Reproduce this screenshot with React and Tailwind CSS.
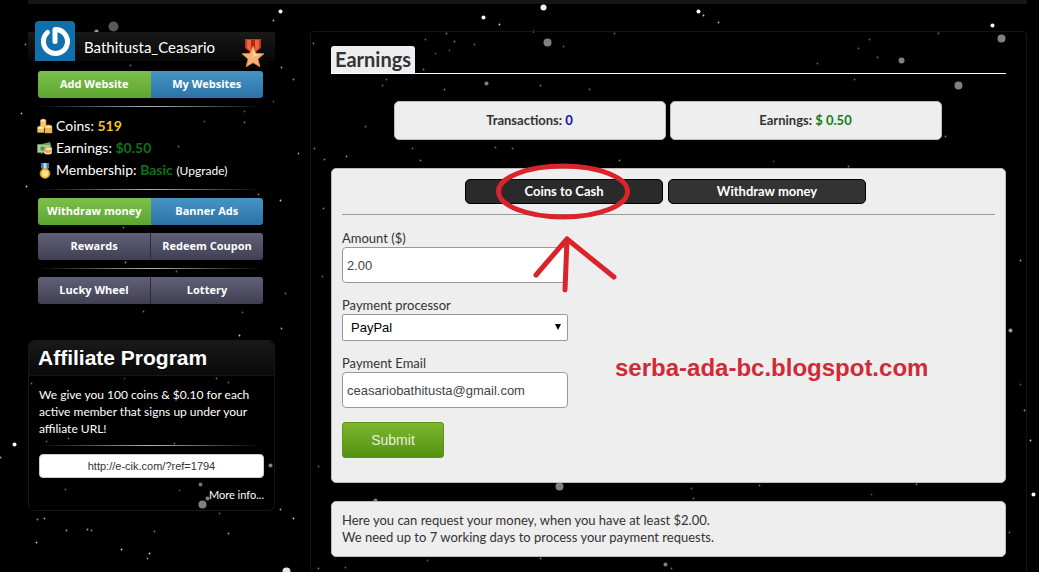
import React, { useState } from "react";

// x, y, radius, brightness
const stars = [
  [113, 26, 5, 0.35], [96, 31, 2, 0.6], [280, 11, 2, 1], [273, 20, 1, 0.9], [25, 44, 1, 0.7],
  [130, 65, 1, 0.5], [281, 67, 1, 0.8], [293, 79, 1, 0.7], [21, 113, 1, 0.9], [244, 111, 1, 0.4],
  [244, 122, 1, 0.6], [204, 121, 1, 0.4], [273, 101, 1, 0.4], [178, 146, 1, 0.5], [298, 153, 1, 0.8],
  [26, 186, 1, 1], [258, 194, 1, 0.6], [280, 200, 1, 1], [123, 227, 1, 0.6], [125, 262, 1, 0.7],
  [176, 271, 1, 0.5], [285, 293, 1, 0.5], [143, 311, 1, 0.5], [242, 312, 1, 0.5], [281, 328, 1, 0.8],
  [239, 335, 1, 1], [31, 383, 1, 0.5], [216, 378, 1, 0.5], [228, 382, 1, 0.5], [124, 378, 1, 0.3],
  [14, 444, 2, 1], [0, 457, 1, 0.8], [46, 441, 1, 0.5], [68, 438, 1, 0.5], [174, 443, 1, 0.5],
  [270, 465, 2, 0.5], [200, 484, 2, 0.45], [207, 498, 2, 0.5], [202, 504, 4, 0.5], [65, 489, 1, 0.5],
  [179, 490, 1, 0.4], [219, 513, 1, 0.5], [280, 509, 1, 0.8], [293, 518, 1, 1], [37, 519, 1, 0.7],
  [44, 518, 1, 0.8], [66, 530, 1, 0.8], [87, 529, 1, 0.8], [91, 530, 1, 0.7], [154, 531, 1, 0.6],
  [228, 533, 1, 0.8], [36, 542, 1, 1], [121, 549, 1, 1], [149, 553, 1, 1], [147, 558, 1, 0.7],
  [286, 571, 4, 0.9], [543, 7, 3, 0.95], [483, 17, 2, 1], [499, 24, 1, 1], [533, 31, 1, 1],
  [446, 33, 1, 0.6], [425, 39, 1, 0.5], [454, 41, 1, 0.6], [474, 44, 1, 0.5], [435, 53, 1, 0.4],
  [449, 50, 1, 0.4], [547, 42, 4, 0.5], [563, 46, 1, 0.5], [614, 33, 1, 0.5], [313, 43, 1, 0.6],
  [423, 69, 1, 0.6], [386, 79, 1, 0.5], [382, 85, 1, 0.5], [444, 89, 1, 0.6], [486, 83, 2, 0.5],
  [540, 85, 1, 0.6], [589, 89, 1, 0.5], [365, 126, 1, 0.5], [314, 148, 1, 0.6], [324, 159, 1, 0.6],
  [346, 156, 1, 0.7], [420, 160, 1, 0.6], [412, 148, 1, 0.5], [495, 147, 1, 0.5], [512, 148, 1, 0.5],
  [619, 160, 1, 0.6], [323, 208, 1, 0.6], [698, 11, 2, 1], [703, 15, 1, 1], [718, 22, 1, 0.9],
  [992, 25, 2, 1], [1001, 38, 4, 0.5], [938, 33, 1, 0.5], [869, 39, 1, 0.5], [858, 48, 1, 0.5],
  [877, 57, 1, 0.5], [901, 60, 3, 0.5], [817, 63, 1, 0.5], [854, 79, 1, 0.5], [958, 85, 4, 0.5],
  [945, 136, 1, 0.6], [848, 166, 1, 0.6], [773, 161, 1, 0.3], [1020, 260, 1, 0.8], [1010, 330, 2, 0.6],
  [1020, 384, 1, 0.4], [1024, 410, 1, 0.7], [1030, 440, 1, 1], [1033, 494, 2, 1], [1009, 532, 1, 0.5],
  [322, 276, 1, 0.5], [318, 466, 1, 0.5], [559, 486, 4, 0.5], [375, 500, 2, 0.5], [691, 488, 1, 0.5],
  [693, 498, 1, 0.5], [759, 485, 1, 0.5], [871, 494, 1, 0.4], [916, 484, 1, 0.6], [427, 560, 1, 0.4],
  [540, 558, 1, 0.6], [665, 564, 2, 0.5], [671, 568, 1, 0.5], [318, 568, 1, 0.6], [345, 567, 1, 0.5],
];

function Stars() {
  return (
    <svg className="absolute inset-0 h-full w-full" aria-hidden="true">
      {stars.map(([x, y, r, o], i) => (
        <circle key={i} cx={x + 0.5} cy={y + 0.5} r={r === 1 ? 0.9 : r} fill="#fff" opacity={r === 1 ? o * 0.8 : o} />
      ))}
    </svg>
  );
}

function PowerAvatar() {
  return (
    <svg viewBox="0 0 40 40" className="-mt-[11px] h-10 w-10 shrink-0 rounded-t" role="img" aria-label="Avatar">
      <rect width="40" height="40" fill="#0f70ab" />
      <path d="M12.500 11.500A12 12 0 1 0 20 8.500V20.500" fill="none" stroke="#fff" strokeWidth="5" strokeLinecap="round" strokeLinejoin="round" />
    </svg>
  );
}

function StarMedal() {
  return (
    <svg viewBox="0 0 24 30" className="h-[30px] w-6" aria-hidden="true">
      <path d="M4 1h16v9l-5 4H9l-5-4z" fill="#c23a1c" />
      <path d="M6 2h4v10H8l-2-2zM14 2h4v8l-2 2h-2z" fill="#ee6440" />
      <path d="M10 2h4v10h-4z" fill="#a82a12" />
      <path d="M12 8l3 7.200 8 .6-6.100 5.200 2 7.800L12 24.700l-6.900 4.100 2-7.800L1 15.800l8-.6z" fill="#f7b274" stroke="#e08a48" strokeWidth=".8" />
      <path d="M12 10l2.300 6 5.500.6L12 19z" fill="#ffd09c" />
    </svg>
  );
}

function CoinsIcon() {
  return (
    <svg viewBox="0 0 16 16" className="h-4 w-4" aria-hidden="true">
      <g stroke="#d09a3c" strokeWidth=".5">
        <path d="M3.500 3v7h5.500V3z" fill="#f5cb6c" />
        <path d="M.5 10v4.500h6.500V10z" fill="#f3c463" />
        <path d="M8 9v6h7V9z" fill="#efba55" />
        <ellipse cx="6.200" cy="2.800" rx="2.800" ry="1.800" fill="#ffe9a5" />
        <ellipse cx="3.800" cy="9.800" rx="3.300" ry="1.900" fill="#ffe9a5" />
        <ellipse cx="11.500" cy="8.800" rx="3.500" ry="1.900" fill="#ffe29a" />
      </g>
    </svg>
  );
}

function CashIcon() {
  return (
    <svg viewBox="0 0 16 16" className="h-4 w-4" aria-hidden="true">
      <path d="M1 5l12-3 2 7-11 5z" fill="#6fa268" />
      <path d="M.5 4.500h12.500v8H.5z" fill="#a9cf97" stroke="#6b9a5d" strokeWidth=".7" />
      <circle cx="5.500" cy="8.500" r="2.200" fill="#5d9055" />
      <path d="M7 10v3c1 2 7 2 8 0V8z" fill="#e5b061" />
      <ellipse cx="11.500" cy="9" rx="3.500" ry="1.900" fill="#ffe1a0" stroke="#c08a3a" strokeWidth=".6" />
      <path d="M7.500 12.500c2 1.500 5 1.500 7 0" fill="none" stroke="#fff0c0" strokeWidth=".8" />
    </svg>
  );
}

function MedalIcon() {
  return (
    <svg viewBox="0 0 16 16" className="h-4 w-4" aria-hidden="true">
      <path d="M4 0h8v5l-2.500 2h-3L4 5z" fill="#3f7fb5" />
      <path d="M6.500 0h3v6h-3z" fill="#b9daf3" />
      <circle cx="8" cy="10.500" r="5" fill="#eebc3e" stroke="#b98420" strokeWidth=".6" />
      <circle cx="8" cy="10.500" r="3.200" fill="#ffe283" />
    </svg>
  );
}

const tones = {
  green: "bg-gradient-to-b from-[#7cc04b] to-[#5da52f]",
  blue: "bg-gradient-to-b from-[#4595c4] to-[#2c72a8]",
  gray: "bg-gradient-to-b from-[#60607a] to-[#414052] first:border-r first:border-[#2b2a38]",
};

function ButtonPair({ items }) {
  return (
    <div className="ml-[10px] mr-3 flex overflow-hidden rounded-[3px]">
      {items.map(([label, tone]) => (
        <button
          key={label}
          type="button"
          className={`h-[27px] flex-1 basis-0 whitespace-nowrap font-['Open_Sans',sans-serif] text-[11px] font-bold text-white ${tones[tone]}`}
        >
          {label}
        </button>
      ))}
    </div>
  );
}

function Divider() {
  return <div className="ml-[10px] mr-3 my-2 h-px bg-gradient-to-r from-transparent via-[#b5b2aa] to-transparent" />;
}

function Sidebar() {
  return (
    <aside className="w-[247px] shrink-0 pt-px">
      <div className="mb-[10px] flex h-[29px] items-start bg-gradient-to-b from-[#191919] to-[#070707] pl-[7px] pr-[10px]">
        <PowerAvatar />
        <span className="ml-[9px] flex-1 text-[15px] leading-[30px]">Bathitusta_Ceasario</span>
        <span className="pt-[6px]">
          <StarMedal />
        </span>
      </div>

      <ButtonPair items={[["Add Website", "green"], ["My Websites", "blue"]]} />
      <Divider />
      <ul className="-mb-px ml-[9px] text-[14px] leading-[22px]">
        <li className="flex items-center gap-[3px]">
          <CoinsIcon />
          <span>Coins: <b className="text-[#f5c528]">519</b></span>
        </li>
        <li className="flex items-center gap-[3px]">
          <CashIcon />
          <span>Earnings: <b className="text-[#12701a]">$0.50</b></span>
        </li>
        <li className="flex items-center gap-[3px]">
          <MedalIcon />
          <span>
            Membership: <b className="text-[#12701a]">Basic</b>{" "}
            <a href="#upgrade" className="text-[12px]">(Upgrade)</a>
          </span>
        </li>
      </ul>
      <Divider />
      <ButtonPair items={[["Withdraw money", "green"], ["Banner Ads", "blue"]]} />
      <div className="h-2" />
      <ButtonPair items={[["Rewards", "gray"], ["Redeem Coupon", "gray"]]} />
      <Divider />
      <ButtonPair items={[["Lucky Wheel", "gray"], ["Lottery", "gray"]]} />

      <section className="mt-9 rounded-md border border-[#171717]">
        <h2 className="rounded-t-md border-b border-[#171717] bg-gradient-to-b from-[#191919] to-[#090909] pl-[9px] font-['Liberation_Sans',sans-serif] text-[21px] font-bold leading-[34px]">
          Affiliate Program
        </h2>
        <p className="mb-2 ml-[10px] mt-[10px] text-[12px] leading-[17px]">
          We give you 100 coins &amp; $0.10 for each
          <br />
          active member that signs up under your
          <br />
          affiliate URL!
        </p>
        <Divider />
        <div className="mx-[10px]">
          <input
            type="text"
            aria-label="Affiliate URL"
            readOnly
            value="http://e-cik.com/?ref=1794"
            className="block h-6 w-full rounded border border-[#ccc] bg-white text-center font-['Liberation_Sans',sans-serif] text-[11px] text-[#333]"
          />
          <a href="#more" className="block pb-[7px] pt-2 text-right text-[11px] leading-[17px]">
            More info...
          </a>
        </div>
      </section>
    </aside>
  );
}

// hand drawn marker around the active tab
function Marker() {
  return (
    <svg
      viewBox="0 0 136 134"
      className="pointer-events-none absolute -top-[17px] left-1/2 z-10 h-[134px] w-[136px] -translate-x-1/2"
      fill="none"
      stroke="#da242c"
      strokeWidth="5"
      strokeLinecap="round"
      strokeLinejoin="round"
      aria-hidden="true"
    >
      <ellipse cx="67" cy="29.500" rx="64.500" ry="25.500" />
      <path d="M40 113L71 77l-2 51M71 77l47 38" />
    </svg>
  );
}

const labelClass = "block text-[13px] leading-[17px]";
const inputClass =
  "block h-9 w-full rounded border border-[#999] bg-white px-1 font-['Liberation_Sans',sans-serif] text-[13px] text-[#444]";
const boxClass = "rounded-[5px] border border-[#bbb] bg-[#eee]";

function EarningsForm() {
  const [formData, setFormData] = useState({
    amount: "2.00",
    processor: "PayPal",
    email: "ceasariobathitusta@gmail.com",
  });

  const handleChange = (e) => {
    setFormData({ ...formData, [e.target.name]: e.target.value });
  };

  return (
    <form className="w-[226px] shrink-0" onSubmit={(e) => e.preventDefault()}>
      <label htmlFor="amount" className={labelClass}>Amount ($)</label>
      <input
        id="amount"
        name="amount"
        value={formData.amount}
        onChange={handleChange}
        className={`${inputClass} mb-[14px]`}
      />
      <label htmlFor="processor" className={labelClass}>Payment processor</label>
      <div className="relative mb-[14px]">
        <select
          id="processor"
          name="processor"
          value={formData.processor}
          onChange={handleChange}
          className="block h-[27px] w-full appearance-none rounded-[2px] border border-[#999] bg-white px-2 font-['Liberation_Sans',sans-serif] text-[13px] text-black"
        >
          <option>PayPal</option>
        </select>
        <svg viewBox="0 0 6 6" className="pointer-events-none absolute right-[7px] top-[10px] h-[6px] w-[6px]" aria-hidden="true">
          <path d="M0 0h6L3 6z" fill="#000" />
        </svg>
      </div>
      <label htmlFor="email" className={labelClass}>Payment Email</label>
      <input
        id="email"
        name="email"
        type="email"
        value={formData.email}
        onChange={handleChange}
        className={`${inputClass} mb-[14px]`}
      />
      <button
        type="submit"
        className="block h-9 w-[102px] rounded-[3px] border border-[#5b9512] bg-gradient-to-b from-[#7db72f] to-[#55920e] font-['Liberation_Sans',sans-serif] text-[14px] text-[#e8f0de]"
      >
        Submit
      </button>
    </form>
  );
}

function App() {
  return (
    <div className="relative flex min-h-screen flex-col bg-black pl-7 pr-3 font-['Lato',sans-serif] text-white">
      <Stars />
      <div className="relative h-1 bg-[#151515]" />
      <div className="relative flex flex-1 gap-[35px] pt-[27px]">
        <Sidebar />

        <main className="min-w-0 flex-1 rounded-t border-x border-t border-[#141414] px-5 pb-4 pt-[14px] text-[13px] text-[#333]">
          <div className="flex border-b border-white">
            <h1 className="rounded-t-[3px] bg-[#eee] px-1 text-[20px] font-bold leading-[27px]">Earnings</h1>
          </div>

          <div className="mt-[27px] flex justify-center gap-1 pr-[2px] text-center font-bold leading-[37px]">
            <div className={`${boxClass} w-[272px]`}>
              Transactions: <span className="text-[#1010b0]">0</span>
            </div>
            <div className={`${boxClass} w-[272px]`}>
              Earnings: <span className="text-[#128012]">$ 0.50</span>
            </div>
          </div>

          <section className={`${boxClass} mt-7 px-[10px] pb-6 pt-[10px]`}>
            <div className="flex justify-center gap-[5px] pr-[6px] font-bold text-white">
              <div className="relative">
                <button type="button" className="block h-[25px] w-[198px] rounded-[5px] border border-black bg-[#2a2a2a]">
                  Coins to Cash
                </button>
                <Marker />
              </div>
              <button type="button" className="h-[25px] w-[198px] rounded-[5px] border border-black bg-[#333]">
                Withdraw money
              </button>
            </div>
            <hr className="mb-[15px] mt-[10px] border-[#999]" />
            <div className="flex items-center gap-[47px]">
              <EarningsForm />
              <p className="mt-12 font-['Liberation_Sans',sans-serif] text-[24px] font-bold leading-7 text-[#cf2a35]">
                serba-ada-bc.blogspot.com
              </p>
            </div>
          </section>

          <section className={`${boxClass} mt-[18px] px-[10px] py-[10px] leading-[17px]`}>
            <p>Here you can request your money, when you have at least $2.00.</p>
            <p>We need up to 7 working days to process your payment requests.</p>
          </section>
        </main>
      </div>
    </div>
  );
}

export default App;
